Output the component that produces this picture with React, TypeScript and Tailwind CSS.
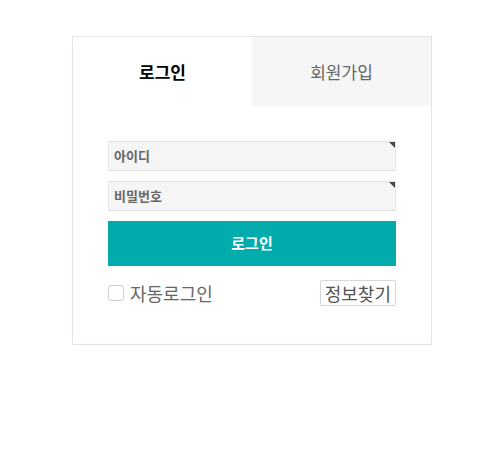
import React from "react";

export default function App() {
  const font = { fontFamily: '"Noto Sans CJK KR", "Noto Sans", sans-serif' };
  return (
    <div className="w-[492px] h-[459px] bg-white pt-9 pl-[72px]" style={font}>
      <div className="w-[360px] h-[309px] border border-[#dce6e6] flex flex-col">
        <div className="flex h-[69px]">
          <div className="flex-1 flex items-center justify-center text-[17px] font-bold text-black">로그인</div>
          <div className="flex-1 flex items-center justify-center text-[17px] text-[#666] bg-[#f6f6f6]">회원가입</div>
        </div>
        <div className="px-[35px] pt-[35px] flex flex-col">
          <div className="relative h-[30px] border border-[#e3e3e3] bg-[#f5f5f5] flex items-center pl-[5px] text-[13px] font-semibold text-[#666]">
            아이디
            <div className="absolute top-0 right-0 w-0 h-0 border-t-[6px] border-l-[6px] border-t-[#4b4b42] border-l-transparent" />
          </div>
          <div className="relative mt-[10px] h-[30px] border border-[#e3e3e3] bg-[#f5f5f5] flex items-center pl-[5px] text-[13px] font-semibold text-[#666]">
            비밀번호
            <div className="absolute top-0 right-0 w-0 h-0 border-t-[6px] border-l-[6px] border-t-[#4b4b42] border-l-transparent" />
          </div>
          <div className="mt-[10px] h-[45px] bg-[#02abac] flex items-center justify-center text-white text-[15px] font-bold">로그인</div>
          <div className="mt-[14px] flex items-center justify-between">
            <div className="flex items-center gap-[6px]">
              <div className="w-4 h-4 border border-[#c9cdd6] rounded-[3px] bg-white" />
              <span className="text-[18px] text-[#666] leading-none">자동로그인</span>
            </div>
            <div className="h-[26px] px-[4px] border border-[#d5d9dd] rounded-[2px] flex items-center text-[18px] text-[#555] leading-none">정보찾기</div>
          </div>
        </div>
      </div>
    </div>
  );
}
